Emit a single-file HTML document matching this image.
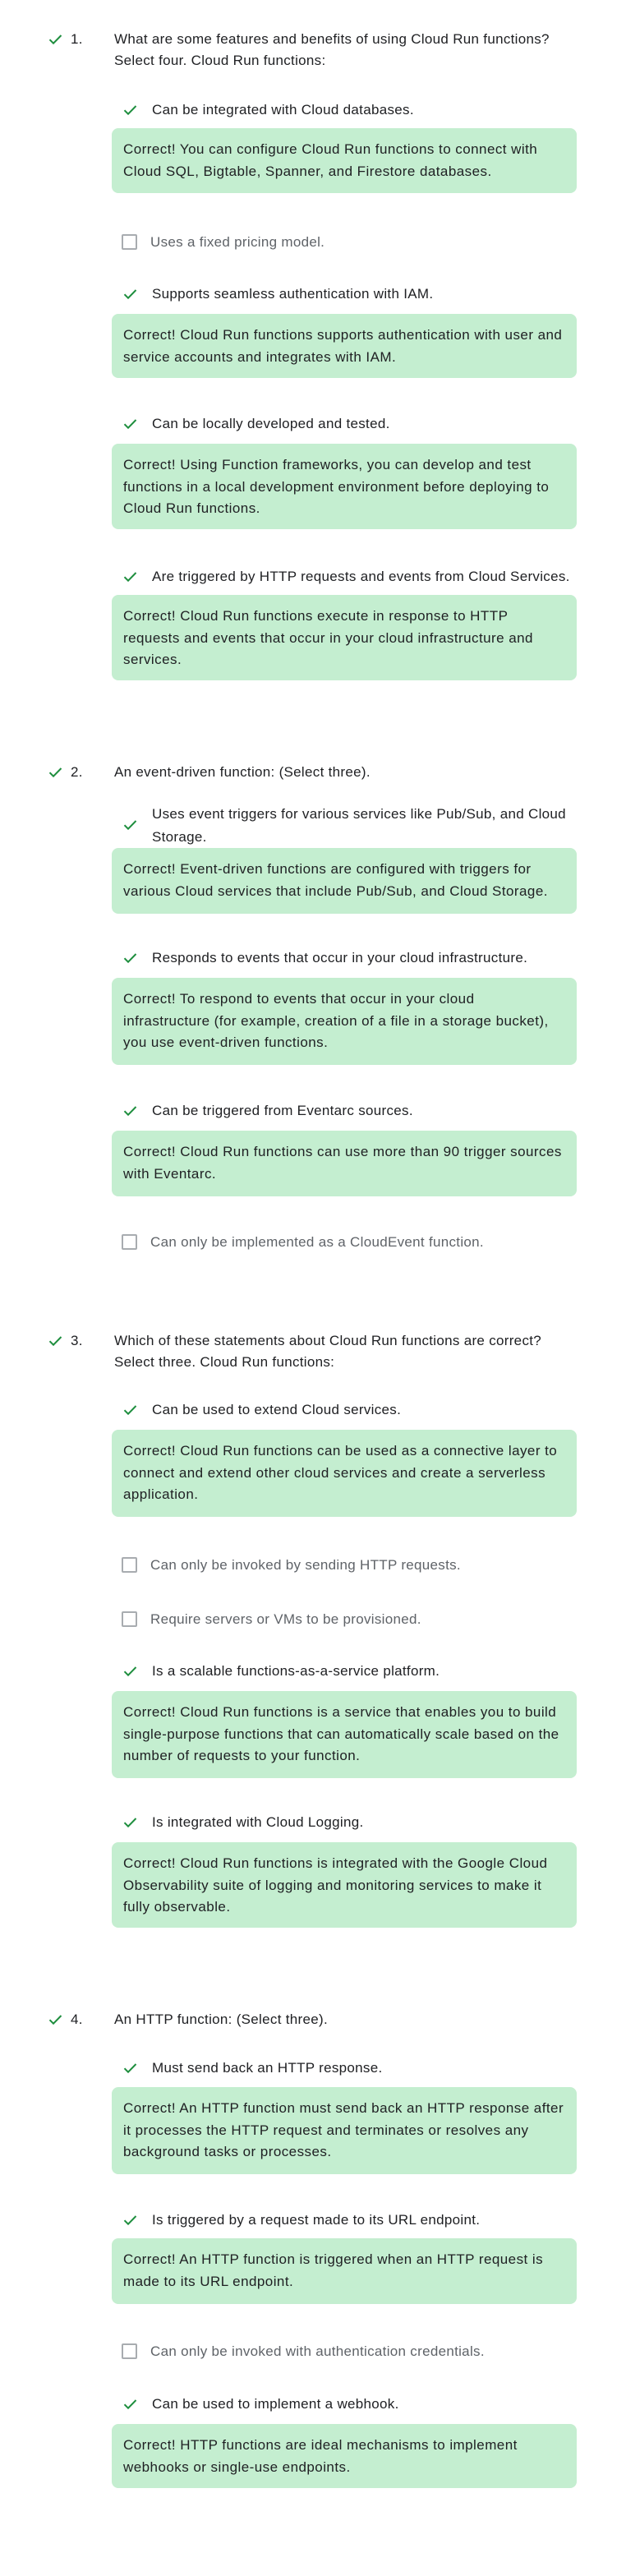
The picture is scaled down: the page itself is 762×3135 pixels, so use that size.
<!DOCTYPE html>
<html><head><meta charset="utf-8">
<style>
body{margin:0;width:762px;height:3135px;background:#fff;position:relative;font-family:"Liberation Sans",Arial,sans-serif;color:#202124;font-size:17px;letter-spacing:0.3px;overflow:hidden}
.a{position:absolute;line-height:26px;white-space:nowrap}
.q{left:139px;width:560px;white-space:normal}
.n{left:86px}
.o{left:185px}
.u{left:183px;color:#5f6368}
.b{position:absolute;left:136px;width:566px;box-sizing:border-box;background:#c4eed0;border-radius:8px;padding:0 10px 0 14px;line-height:26.5px;letter-spacing:0.45px}
.ck{position:absolute;width:17px;height:14px}
.cb{position:absolute;left:148px;width:15px;height:15px;border:2px solid #a8acb0;border-radius:2px}
</style></head><body>
<svg width="0" height="0" style="position:absolute"><defs><symbol id="c" viewBox="0 0 17 14"><path d="M1.5 7.2 L6 11.7 L15.5 2" fill="none" stroke="#1e8e3e" stroke-width="2"/></symbol></defs></svg>

<!-- Q1 -->
<svg class="ck" style="left:59px;top:41px"><use href="#c"/></svg>
<div class="a n" style="top:35px">1.</div>
<div class="a q" style="top:35px">What are some features and benefits of using Cloud Run functions? Select four. Cloud Run functions:</div>

<svg class="ck" style="left:150px;top:127px"><use href="#c"/></svg>
<div class="a o" style="top:121px">Can be integrated with Cloud databases.</div>
<div class="b" style="top:156px;height:79px;padding-top:13px">Correct! You can configure Cloud Run functions to connect with Cloud SQL, Bigtable, Spanner, and Firestore databases.</div>

<div class="cb" style="top:285px"></div>
<div class="a u" style="top:282px">Uses a fixed pricing model.</div>

<svg class="ck" style="left:150px;top:351px"><use href="#c"/></svg>
<div class="a o" style="top:345px">Supports seamless authentication with IAM.</div>
<div class="b" style="top:382px;height:78px;padding-top:13px">Correct! Cloud Run functions supports authentication with user and service accounts and integrates with IAM.</div>

<svg class="ck" style="left:150px;top:509px"><use href="#c"/></svg>
<div class="a o" style="top:503px">Can be locally developed and tested.</div>
<div class="b" style="top:540px;height:104px;padding-top:13px">Correct! Using Function frameworks, you can develop and test functions in a local development environment before deploying to Cloud Run functions.</div>

<svg class="ck" style="left:150px;top:695px"><use href="#c"/></svg>
<div class="a o" style="top:689px">Are triggered by HTTP requests and events from Cloud Services.</div>
<div class="b" style="top:724px;height:104px;padding-top:13px">Correct! Cloud Run functions execute in response to HTTP<br>requests and events that occur in your cloud infrastructure and<br>services.</div>

<!-- Q2 -->
<svg class="ck" style="left:59px;top:933px"><use href="#c"/></svg>
<div class="a n" style="top:927px">2.</div>
<div class="a q" style="top:927px">An event-driven function: (Select three).</div>

<svg class="ck" style="left:150px;top:997px"><use href="#c"/></svg>
<div class="a o" style="top:977px;width:515px;white-space:normal;line-height:28px">Uses event triggers for various services like Pub/Sub, and Cloud Storage.</div>
<div class="b" style="top:1032px;height:80px;padding-top:13px">Correct! Event-driven functions are configured with triggers for<br>various Cloud services that include Pub/Sub, and Cloud Storage.</div>

<svg class="ck" style="left:150px;top:1159px"><use href="#c"/></svg>
<div class="a o" style="top:1153px">Responds to events that occur in your cloud infrastructure.</div>
<div class="b" style="top:1190px;height:106px;padding-top:13px">Correct! To respond to events that occur in your cloud<br>infrastructure (for example, creation of a file in a storage bucket),<br>you use event-driven functions.</div>

<svg class="ck" style="left:150px;top:1345px"><use href="#c"/></svg>
<div class="a o" style="top:1339px">Can be triggered from Eventarc sources.</div>
<div class="b" style="top:1376px;height:80px;padding-top:13px">Correct! Cloud Run functions can use more than 90 trigger sources<br>with Eventarc.</div>

<div class="cb" style="top:1502px"></div>
<div class="a u" style="top:1499px">Can only be implemented as a CloudEvent function.</div>

<!-- Q3 -->
<svg class="ck" style="left:59px;top:1625px"><use href="#c"/></svg>
<div class="a n" style="top:1619px">3.</div>
<div class="a q" style="top:1619px">Which of these statements about Cloud Run functions are correct?<br>Select three. Cloud Run functions:</div>

<svg class="ck" style="left:150px;top:1709px"><use href="#c"/></svg>
<div class="a o" style="top:1703px">Can be used to extend Cloud services.</div>
<div class="b" style="top:1740px;height:106px;padding-top:13px">Correct! Cloud Run functions can be used as a connective layer to<br>connect and extend other cloud services and create a serverless<br>application.</div>

<div class="cb" style="top:1895px"></div>
<div class="a u" style="top:1892px">Can only be invoked by sending HTTP requests.</div>

<div class="cb" style="top:1961px"></div>
<div class="a u" style="top:1958px">Require servers or VMs to be provisioned.</div>

<svg class="ck" style="left:150px;top:2027px"><use href="#c"/></svg>
<div class="a o" style="top:2021px">Is a scalable functions-as-a-service platform.</div>
<div class="b" style="top:2058px;height:106px;padding-top:13px">Correct! Cloud Run functions is a service that enables you to build<br>single-purpose functions that can automatically scale based on the<br>number of requests to your function.</div>

<svg class="ck" style="left:150px;top:2211px"><use href="#c"/></svg>
<div class="a o" style="top:2205px">Is integrated with Cloud Logging.</div>
<div class="b" style="top:2242px;height:104px;padding-top:13px">Correct! Cloud Run functions is integrated with the Google Cloud<br>Observability suite of logging and monitoring services to make it<br>fully observable.</div>

<!-- Q4 -->
<svg class="ck" style="left:59px;top:2451px"><use href="#c"/></svg>
<div class="a n" style="top:2445px">4.</div>
<div class="a q" style="top:2445px">An HTTP function: (Select three).</div>

<svg class="ck" style="left:150px;top:2510px"><use href="#c"/></svg>
<div class="a o" style="top:2504px">Must send back an HTTP response.</div>
<div class="b" style="top:2540px;height:106px;padding-top:13px">Correct! An HTTP function must send back an HTTP response after<br>it processes the HTTP request and terminates or resolves any<br>background tasks or processes.</div>

<svg class="ck" style="left:150px;top:2695px"><use href="#c"/></svg>
<div class="a o" style="top:2689px">Is triggered by a request made to its URL endpoint.</div>
<div class="b" style="top:2724px;height:80px;padding-top:13px">Correct! An HTTP function is triggered when an HTTP request is<br>made to its URL endpoint.</div>

<div class="cb" style="top:2852px"></div>
<div class="a u" style="top:2849px">Can only be invoked with authentication credentials.</div>

<svg class="ck" style="left:150px;top:2919px"><use href="#c"/></svg>
<div class="a o" style="top:2913px">Can be used to implement a webhook.</div>
<div class="b" style="top:2950px;height:78px;padding-top:13px">Correct! HTTP functions are ideal mechanisms to implement<br>webhooks or single-use endpoints.</div>
</body></html>
